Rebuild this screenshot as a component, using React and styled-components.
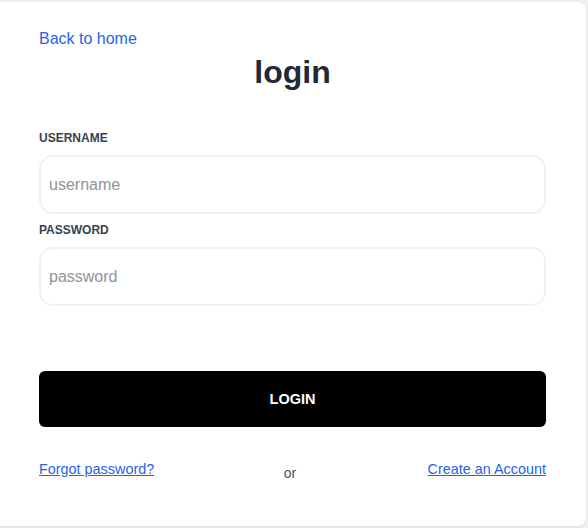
import React from "react";
import styled, { createGlobalStyle } from "styled-components";

const Global = createGlobalStyle`
  html, body { margin: 0; padding: 0; }
  body {
    background: #eeeff2;
    font-family: "Liberation Sans", Arial, Helvetica, sans-serif;
  }
  * { box-sizing: border-box; }
`;

const Page = styled.div`
  width: 588px;
  height: 528px;
  padding: 2px 2px 2px 0;
  display: flex;
`;

const Card = styled.div`
  flex: 1;
  background: #ffffff;
  border-radius: 0 8px 8px 0;
  box-shadow: 0 1px 3px rgba(0, 0, 0, 0.08);
  padding: 25px 40px 0 39px;
  display: flex;
  flex-direction: column;
`;

const BackLink = styled.a`
  align-self: flex-start;
  color: #2563eb;
  font-size: 16px;
  line-height: 24px;
  text-decoration: none;
  height: 24px;
`;

const Title = styled.h1`
  margin: 1px 0 0;
  text-align: center;
  font-size: 32px;
  line-height: 40px;
  font-weight: 700;
  color: #1f2937;
`;

const Form = styled.form`
  display: flex;
  flex-direction: column;
  margin-top: 38px;
`;

const Field = styled.div`
  display: flex;
  flex-direction: column;
  margin-top: ${(p) => (p.$first ? "0" : "8px")};
`;

const Label = styled.label`
  font-size: 12px;
  line-height: 16px;
  font-weight: 700;
  color: #374151;
  text-transform: uppercase;
  margin-bottom: 9px;
`;

const Input = styled.input`
  height: 59px;
  border: 2px solid #f1f1f3;
  border-radius: 14px;
  padding: 0 8px;
  font-family: inherit;
  font-size: 16px;
  color: #111827;
  outline: none;
  background: #fff;
  &::placeholder { color: #8e939b; }
`;

const Button = styled.button`
  margin-top: 65px;
  height: 56px;
  background: #000;
  color: #fff;
  border: none;
  border-radius: 6px;
  font-family: inherit;
  font-size: 14.5px;
  font-weight: 700;
  cursor: pointer;
`;

const Footer = styled.div`
  margin-top: 32px;
  display: flex;
  justify-content: space-between;
  align-items: flex-start;
`;

const FooterLink = styled.a`
  color: #2563eb;
  font-size: 14.4px;
  line-height: 20px;
  text-decoration: underline;
`;

const Or = styled.span`
  margin-top: 4px;
  color: #4b5563;
  font-size: 14px;
  line-height: 20px;
  padding-right: 2px;
`;

export default function App() {
  return (
    <>
      <Global />
      <Page>
        <Card>
          <BackLink href="#">Back to home</BackLink>
          <Title>login</Title>
          <Form onSubmit={(e) => e.preventDefault()}>
            <Field $first>
              <Label htmlFor="username">Username</Label>
              <Input id="username" placeholder="username" />
            </Field>
            <Field>
              <Label htmlFor="password">Password</Label>
              <Input id="password" type="password" placeholder="password" />
            </Field>
            <Button type="submit">LOGIN</Button>
          </Form>
          <Footer>
            <FooterLink href="#">Forgot password?</FooterLink>
            <Or>or</Or>
            <FooterLink href="#">Create an Account</FooterLink>
          </Footer>
        </Card>
      </Page>
    </>
  );
}
